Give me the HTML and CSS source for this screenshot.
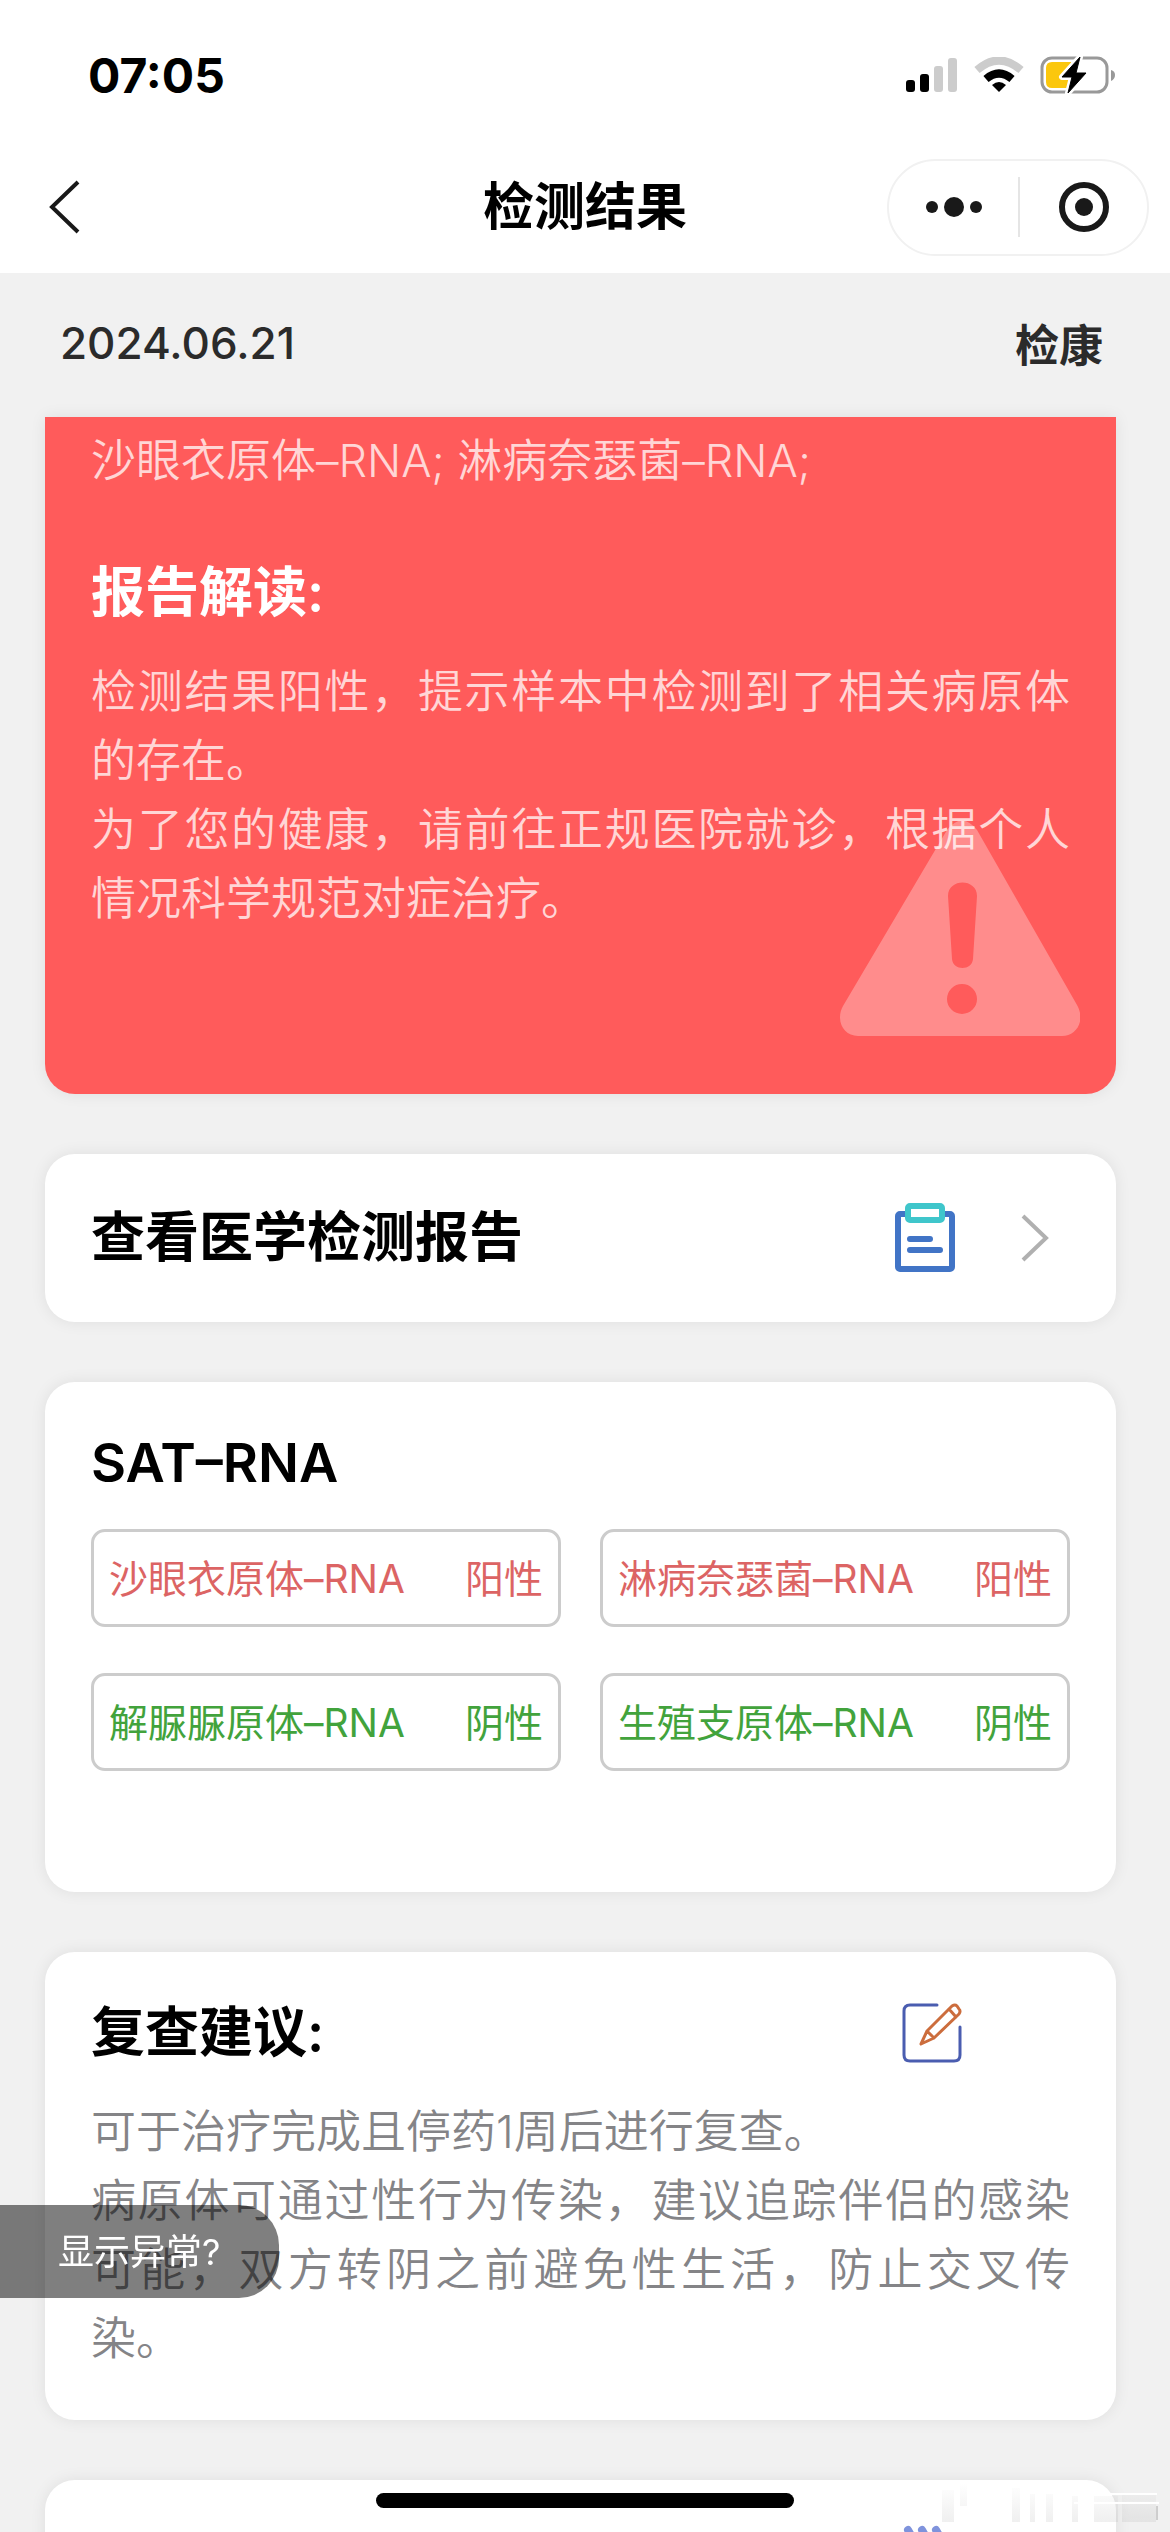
FILE: index.html
```html
<!DOCTYPE html>
<html lang="zh-CN">
<head>
    <meta charset="UTF-8">
    <meta name="viewport" content="width=device-width, initial-scale=1.0">
    <title>检测结果</title>
    <link rel="stylesheet" href="styles.css">
</head>
<body>
    <header class="header">
        <div class="status-bar">
            <span class="time">07:05</span>
            <div class="status-icons">
                <svg width="52" height="36" viewBox="0 0 52 36">
                    <rect x="0" y="23" width="9" height="12" rx="3"/>
                    <rect x="14" y="17" width="9" height="18" rx="3"/>
                    <rect x="28" y="9" width="9" height="26" rx="3" fill="#ccc"/>
                    <rect x="42" y="1" width="9" height="34" rx="3" fill="#ccc"/>
                </svg>
                <svg width="50" height="36" viewBox="0 0 50 36">
                    <path d="M3 13 Q25 -6 47 13" fill="none" stroke="#ccc" stroke-width="8"/>
                    <path d="M12 22 Q25 11 38 22" fill="none" stroke="#000" stroke-width="8"/>
                    <path d="M25 35 L18 28 Q25 22 32 28 Z"/>
                </svg>
                <svg width="76" height="38" viewBox="0 0 76 38">
                    <rect x="2" y="2" width="65" height="34" rx="10" fill="none" stroke="#999" stroke-width="3"/>
                    <path d="M71 14 Q75 15 75 19 Q75 23 71 25 Z" fill="#999"/>
                    <path d="M12 6 H31 V32 H12 Q6 32 6 26 V12 Q6 6 12 6 Z" fill="#fbc70d"/>
                    <path d="M40 1 L22 21 H32 L28 37 L46 17 H36 Z" stroke="#fff" stroke-width="6" stroke-linejoin="round"/>
                    <path d="M40 1 L22 21 H32 L28 37 L46 17 H36 Z" stroke="#000" stroke-width="1" stroke-linejoin="round"/>
                </svg>
            </div>
        </div>
        <nav class="nav">
            <button class="back-btn" aria-label="返回">
                <svg width="32" height="54" viewBox="0 0 32 54"><path d="M29 2 L3 27 L29 52" fill="none" stroke="#191919" stroke-width="4"/></svg>
            </button>
            <h1>检测结果</h1>
            <div class="capsule">
                <button aria-label="更多">
                    <svg width="56" height="20" viewBox="0 0 56 20"><circle cx="6" cy="10" r="6"/><circle cx="28" cy="10" r="10"/><circle cx="50" cy="10" r="6"/></svg>
                </button>
                <button aria-label="关闭">
                    <svg width="52" height="52" viewBox="0 0 52 52"><circle cx="26" cy="26" r="22" fill="none" stroke="#191919" stroke-width="6"/><circle cx="26" cy="26" r="9"/></svg>
                </button>
            </div>
        </nav>
    </header>

    <div class="info-bar">
        <span>2024.06.21</span>
        <span class="brand">检康</span>
    </div>

    <main class="content">
        <section class="card alert">
            <p class="text">沙眼衣原体–RNA; 淋病奈瑟菌–RNA;</p>
            <h2>报告解读:</h2>
            <p class="text">检测结果阳性，提示样本中检测到了相关病原体的存在。</p>
            <p class="text">为了您的健康，请前往正规医院就诊，根据个人情况科学规范对症治疗。</p>
            <svg class="warning" width="240" height="220" viewBox="0 0 240 220">
                <path fill="#fff" fill-opacity="0.3" fill-rule="evenodd" d="M107 14 Q122 -5 137 14 L237 189 C246 205 236 220 222 220 H18 C4 220 -5 205 3 190 Z M108 80 L112 143 C113 155 132 155 133 143 L137 80 C137 62 108 62 108 80 Z M122 168 A15 15 0 1 0 122 198 A15 15 0 1 0 122 168 Z"/>
            </svg>
        </section>

        <a class="card report" href="#">
            <h2>查看医学检测报告</h2>
            <svg class="report-icon" width="60" height="70" viewBox="0 0 60 70" fill="none">
                <rect x="3" y="11" width="54" height="55" rx="2" stroke="#4174c6" stroke-width="6"/>
                <rect x="12" y="2" width="36" height="16" fill="#fff"/>
                <rect x="13" y="3" width="34" height="14" rx="2" stroke="#3fc6cb" stroke-width="6"/>
                <path d="M15 36 H35 M15 47 H45" stroke="#4174c6" stroke-width="6" stroke-linecap="round"/>
            </svg>
            <svg width="28" height="48" viewBox="0 0 28 48"><path d="M2 2 L25 24 L2 46" fill="none" stroke="#b0b0b0" stroke-width="4"/></svg>
        </a>

        <section class="card results">
            <h2>SAT–RNA</h2>
            <ul class="result-list">
                <li class="positive"><span>沙眼衣原体–RNA</span><span>阳性</span></li>
                <li class="positive"><span>淋病奈瑟菌–RNA</span><span>阳性</span></li>
                <li class="negative"><span>解脲脲原体–RNA</span><span>阴性</span></li>
                <li class="negative"><span>生殖支原体–RNA</span><span>阴性</span></li>
            </ul>
        </section>

        <section class="card advice">
            <div class="advice-title">
                <h2>复查建议:</h2>
                <svg width="60" height="60" viewBox="0 0 60 60" fill="none" stroke-linecap="round" stroke-linejoin="round">
                    <path d="M35 2 H8 Q2 2 2 8 V52 Q2 58 8 58 H52 Q58 58 58 52 V24" stroke="#4a5db0" stroke-width="3"/>
                    <path d="M19 41 L25 28 L50 3 Q53 1 55 3 L57 6 Q59 8 57 11 L32 35 Z M25 28 L32 35 M47 6 L54 14" stroke="#cc6d3d" stroke-width="3"/>
                </svg>
            </div>
            <p class="text">可于治疗完成且停药1周后进行复查。</p>
            <p class="text">病原体可通过性行为传染，建议追踪伴侣的感染可能，双方转阴之前避免性生活，防止交叉传染。</p>
        </section>

        <section class="card next">
            <svg width="60" height="60" viewBox="0 0 60 60"><path d="M6 8 L14 22 M20 8 L28 22 M34 8 L42 22" stroke="#7f93dc" stroke-width="8" stroke-linecap="round"/></svg>
        </section>
    </main>

    <button class="feedback">显示异常?</button>
    <svg class="watermark" width="222" height="40" viewBox="0 0 222 40">
        <defs>
            <linearGradient id="fade" x1="0" y1="0" x2="0" y2="1">
                <stop offset="0" stop-color="#999" stop-opacity="0"/>
                <stop offset="1" stop-color="#999" stop-opacity="0.15"/>
            </linearGradient>
        </defs>
        <path fill="url(#fade)" d="M2 6 H14 V38 H2 Z M20 0 H27 V22 H20 Z M72 4 H80 V38 H72 Z M90 10 H95 V38 H90 Z M106 10 H113 V38 H106 Z M132 12 H138 V38 H132 Z M154 12 H178 V38 H154 Z M182 10 H216 V38 H182 Z"/>
        <path d="M170 10 H217 M134 19 H219" stroke="#fff" stroke-width="2"/>
        <path d="M217 22 V36" stroke="#aaa" stroke-width="1"/>
    </svg>
    <div class="home-bar"></div>
</body>
</html>
```
FILE: styles.css
```css
* {
    margin: 0;
    padding: 0;
    box-sizing: border-box;
}
html {
    height: 100%;
}
body {
    display: flex;
    flex-direction: column;
    height: 100%;
    overflow: hidden;
    background-color: #f1f1f1;
    color: #000;
    font-family: Inter, "Noto Sans CJK SC", sans-serif;
}
svg {
    display: block;
    flex-shrink: 0;
}
button {
    border: none;
    background: none;
    font-family: inherit;
    cursor: pointer;
}
h2 {
    font-size: 54px;
    line-height: 78px;
    font-weight: 600;
}

/* 顶部 */
.header {
    flex-shrink: 0;
    padding-bottom: 9px;
    background-color: #fff;
}
.status-bar {
    display: flex;
    align-items: center;
    justify-content: space-between;
    height: 150px;
    padding: 0 54px 0 88px;
}
.time {
    font-size: 48px;
    font-weight: 700;
}
.status-icons {
    display: flex;
    align-items: center;
    gap: 16px;
}
.nav {
    display: grid;
    grid-template-columns: 1fr auto 1fr;
    align-items: center;
    height: 114px;
    padding: 0 21px;
}
.nav h1 {
    font-size: 51px;
    line-height: 72px;
    font-weight: 600;
}
.back-btn {
    justify-self: start;
    padding: 0 28px;
}
.capsule {
    display: flex;
    align-items: center;
    justify-self: end;
    width: 262px;
    height: 97px;
    border: 2px solid #f1f1f1;
    border-radius: 49px;
}
.capsule button {
    display: flex;
    align-items: center;
    justify-content: center;
    width: 50%;
    height: 60px;
    fill: #191919;
}
.capsule button + button {
    border-left: 2px solid #e5e5e5;
}

/* 日期 */
.info-bar {
    display: flex;
    align-items: center;
    justify-content: space-between;
    flex-shrink: 0;
    height: 144px;
    padding: 0 67px 4px 60px;
    color: #2b2b2b;
    font-size: 44px;
    font-weight: 500;
}
.brand {
    font-weight: 600;
}

/* 卡片 */
.content {
    display: flex;
    flex-direction: column;
    flex: 1;
    gap: 60px;
    min-height: 0;
    padding: 0 54px 0 45px;
}
.card {
    position: relative;
    flex-shrink: 0;
    padding: 42px 46px;
    border-radius: 30px;
    background-color: #fff;
    box-shadow: 0 0 16px rgba(0, 0, 0, 0.08);
}
.text {
    font-size: 45px;
    line-height: 69px;
    font-weight: 350;
    text-align: justify;
}
.alert {
    padding-top: 9px;
    padding-bottom: 161px;
    border-radius: 0 0 30px 30px;
    background-color: #ff5b5b;
    color: #fff;
}
.alert .text {
    color: rgba(255, 255, 255, 0.75);
}
.alert h2 {
    margin: 59px 0 25px;
}
.warning {
    position: absolute;
    right: 36px;
    bottom: 58px;
}
.report {
    display: flex;
    align-items: center;
    height: 168px;
    padding-right: 67px;
    color: #000;
    text-decoration: none;
}
.report-icon {
    margin-left: auto;
    margin-right: 66px;
}
.results {
    padding-bottom: 121px;
}
.result-list {
    display: grid;
    grid-template-columns: 1fr 1fr;
    gap: 46px 39px;
    margin-top: 27px;
    list-style: none;
}
.result-list li {
    display: flex;
    align-items: center;
    justify-content: space-between;
    height: 98px;
    padding: 0 15px 4px;
    border: 3px solid #ccc;
    border-radius: 14px;
    font-size: 39px;
    white-space: nowrap;
}
.positive {
    color: #dc6464;
}
.negative {
    color: #42a33c;
}
.advice {
    padding-bottom: 47px;
}
.advice-title {
    display: flex;
    align-items: center;
    justify-content: space-between;
    margin-bottom: 25px;
    padding-right: 108px;
}
.advice .text {
    color: #848487;
}
.next {
    display: flex;
    justify-content: flex-end;
    flex: 1;
    padding-right: 154px;
    border-radius: 30px 30px 0 0;
}

/* 悬浮层 */
.feedback {
    position: fixed;
    left: 0;
    bottom: 234px;
    width: 279px;
    height: 93px;
    padding: 0 0 6px 58px;
    border-radius: 0 40px 40px 0;
    background-color: rgba(0, 0, 0, 0.5);
    color: #fff;
    font-size: 36px;
    text-align: left;
}
.watermark {
    position: fixed;
    right: 8px;
    bottom: 8px;
}
.home-bar {
    position: fixed;
    left: 50%;
    bottom: 24px;
    width: 418px;
    height: 15px;
    border-radius: 8px;
    background-color: #000;
    transform: translateX(-50%);
}
```
